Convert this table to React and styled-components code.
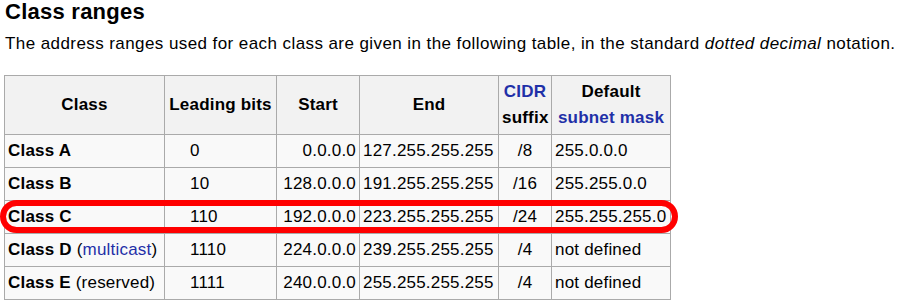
import React from "react";
import styled, { createGlobalStyle } from "styled-components";

const Global = createGlobalStyle`
  html, body { margin: 0; padding: 0; background: #fff; }
  body { font-family: "Liberation Sans", Arial, Helvetica, sans-serif; color: #000; }
`;

const Page = styled.div`
  width: 900px;
  height: 300px;
  overflow: hidden;
  padding-left: 4px;
  box-sizing: border-box;
`;

const Heading = styled.h3`
  margin: 0;
  font-size: 22px;
  line-height: 24px;
  font-weight: bold;
  letter-spacing: 0.25px;
  padding-left: 1px;
`;

const Intro = styled.p`
  margin: 8px 0 0 1px;
  font-size: 17px;
  line-height: 24px;
  letter-spacing: 0.42px;
  white-space: nowrap;
`;

const TableWrap = styled.div`
  position: relative;
  margin-top: 19px;
  width: 666px;
`;

const Table = styled.table`
  border-collapse: collapse;
  table-layout: fixed;
  width: 666px;
  font-size: 17px;
  letter-spacing: 0.2px;
  line-height: 26px;
  background: #f9f9f9;
`;

const Th = styled.th`
  background: #f2f2f2;
  border: 1px solid #aaa;
  padding: 3px 3px;
  font-weight: bold;
  text-align: center;
  white-space: nowrap;
`;

const Td = styled.td`
  border: 1px solid #aaa;
  padding: 3px;
  padding-left: ${(p) => (p.$indent ? "25px" : "3px")};
  text-align: ${(p) => p.$align || "left"};
  white-space: nowrap;
`;

const Link = styled.span`
  color: #1f30a8;
`;

const Strong = styled.b`
  font-weight: bold;
`;

const Highlight = styled.div`
  position: absolute;
  left: -4px;
  top: 125px;
  width: 678px;
  height: 33px;
  box-sizing: border-box;
  border: 6px solid #f00;
  border-radius: 17px;
  pointer-events: none;
`;

const rows = [
  { cls: <Strong>Class A</Strong>, bits: "0", start: "0.0.0.0", end: "127.255.255.255", cidr: "/8", mask: "255.0.0.0" },
  { cls: <Strong>Class B</Strong>, bits: "10", start: "128.0.0.0", end: "191.255.255.255", cidr: "/16", mask: "255.255.0.0" },
  { cls: <Strong>Class C</Strong>, bits: "110", start: "192.0.0.0", end: "223.255.255.255", cidr: "/24", mask: "255.255.255.0" },
  {
    cls: (
      <>
        <Strong>Class D</Strong> (<Link>multicast</Link>)
      </>
    ),
    bits: "1110",
    start: "224.0.0.0",
    end: "239.255.255.255",
    cidr: "/4",
    mask: "not defined",
  },
  {
    cls: (
      <>
        <Strong>Class E</Strong> (reserved)
      </>
    ),
    bits: "1111",
    start: "240.0.0.0",
    end: "255.255.255.255",
    cidr: "/4",
    mask: "not defined",
  },
];

export default function App() {
  return (
    <Page>
      <Global />
      <Heading>Class ranges</Heading>
      <Intro>
        The address ranges used for each class are given in the following table, in the standard{" "}
        <i>dotted decimal</i> notation.
      </Intro>
      <TableWrap>
        <Table>
          <colgroup>
            <col style={{ width: 160 }} />
            <col style={{ width: 112 }} />
            <col style={{ width: 83 }} />
            <col style={{ width: 139 }} />
            <col style={{ width: 53 }} />
            <col style={{ width: 119 }} />
          </colgroup>
          <thead>
            <tr>
              <Th>Class</Th>
              <Th>Leading bits</Th>
              <Th>Start</Th>
              <Th>End</Th>
              <Th>
                <Link>CIDR</Link>
                <br />
                suffix
              </Th>
              <Th>
                Default
                <br />
                <Link>subnet mask</Link>
              </Th>
            </tr>
          </thead>
          <tbody>
            {rows.map((r, i) => (
              <tr key={i}>
                <Td>{r.cls}</Td>
                <Td $indent>{r.bits}</Td>
                <Td $align="right">{r.start}</Td>
                <Td>{r.end}</Td>
                <Td $align="center">{r.cidr}</Td>
                <Td>{r.mask}</Td>
              </tr>
            ))}
          </tbody>
        </Table>
        <Highlight />
      </TableWrap>
    </Page>
  );
}
